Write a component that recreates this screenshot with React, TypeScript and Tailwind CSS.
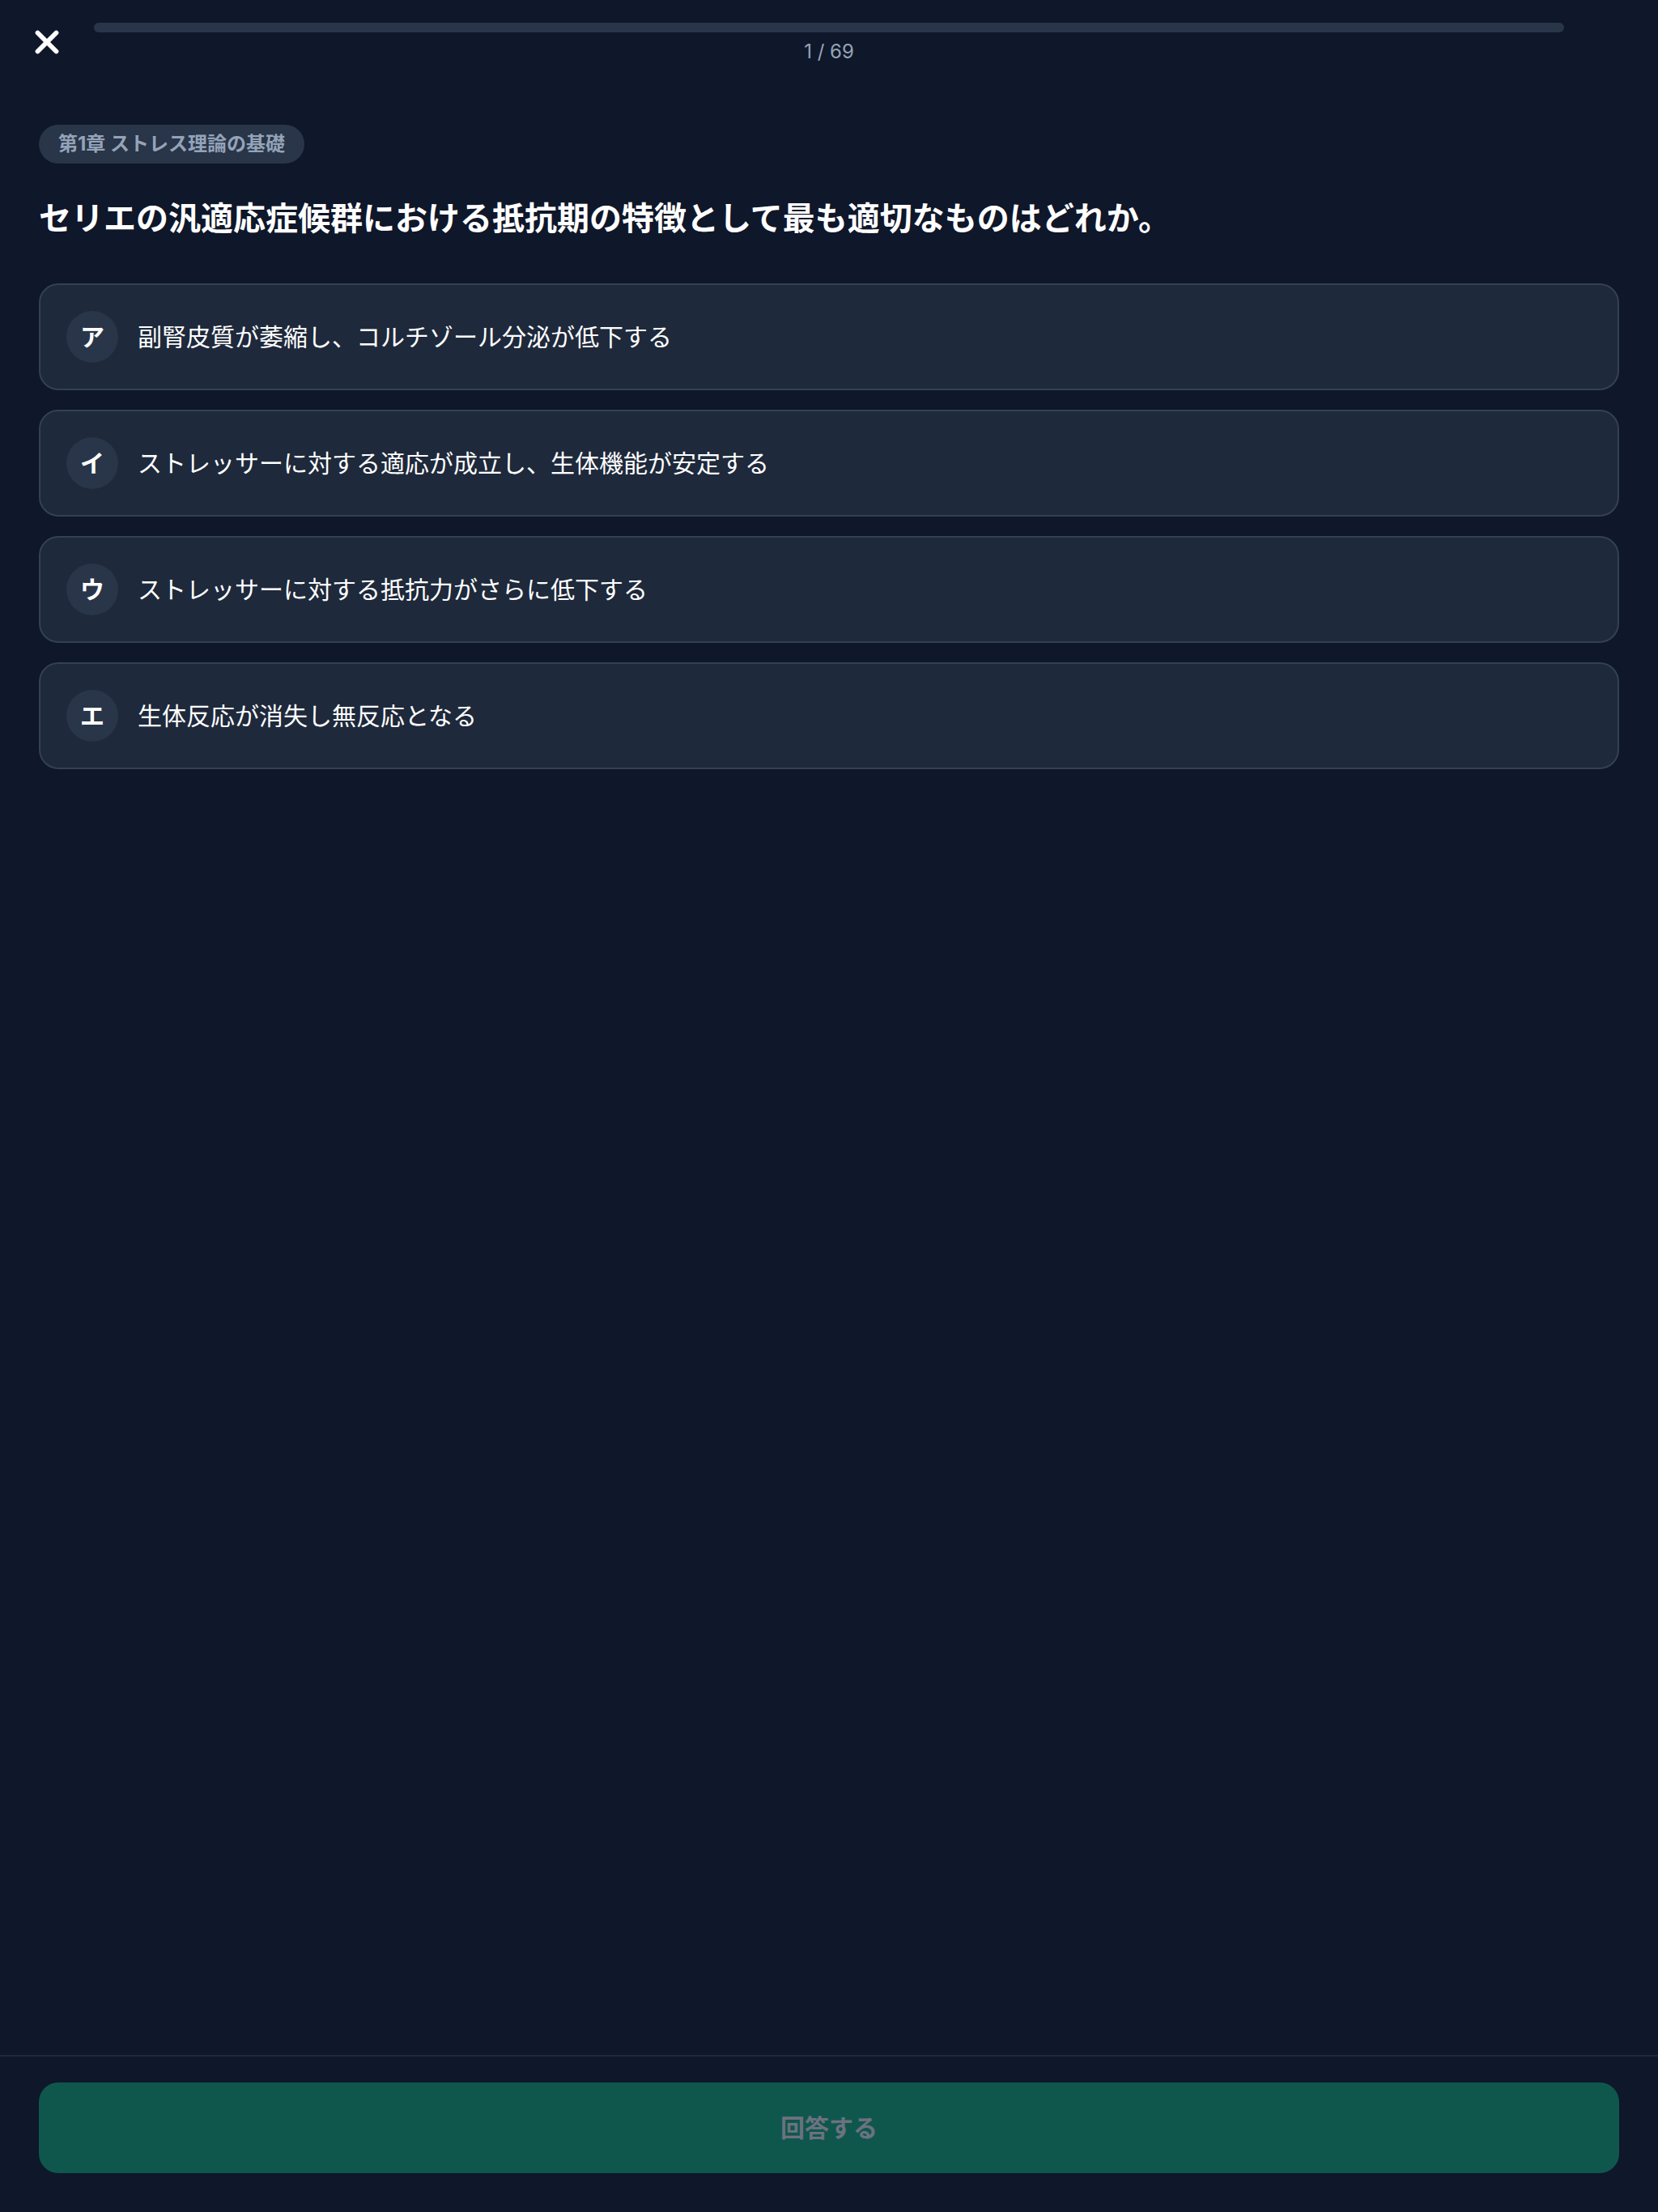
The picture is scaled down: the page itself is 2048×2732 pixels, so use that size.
import { X } from 'lucide-react'

const choices = [
  { key: 'ア', text: '副腎皮質が萎縮し、コルチゾール分泌が低下する' },
  { key: 'イ', text: 'ストレッサーに対する適応が成立し、生体機能が安定する' },
  { key: 'ウ', text: 'ストレッサーに対する抵抗力がさらに低下する' },
  { key: 'エ', text: '生体反応が消失し無反応となる' },
]

const FONT = 'font-["Inter","Noto_Sans_CJK_JP",sans-serif]'

export default function App() {
  return (
    <div className={`min-h-screen flex flex-col bg-[#0f172a] text-white ${FONT}`}>
      {/* ヘッダー: 閉じる + 進捗 */}
      <header className="flex items-start pt-[28px]">
        <div className="w-[116px] flex justify-center">
          <button className="h-[48px] w-[48px] flex items-center justify-center text-white" aria-label="閉じる">
            <X size={46} strokeWidth={3} />
          </button>
        </div>
        <div className="flex-1 flex flex-col">
          <div className="h-[12px] w-full rounded-full bg-[#293548]" />
          <div className="mt-[8px] text-center text-[24px] leading-[32px] text-[#94a3b8]">1 / 69</div>
        </div>
        <div className="w-[116px]" />
      </header>

      {/* 問題 */}
      <main className="flex-1 px-[48px] pt-[74px]">
        <span className="inline-flex h-[48px] items-center rounded-full bg-[#293548] px-[24px] text-[24px] font-bold text-[#94a3b8]">
          第1章 ストレス理論の基礎
        </span>

        <h1 className="mt-[40px] text-[40px] leading-[56px] font-bold text-white">
          セリエの汎適応症候群における抵抗期の特徴として最も適切なものはどれか。
        </h1>

        <div className="mt-[52px] flex flex-col gap-[24px]">
          {choices.map((c) => (
            <button
              key={c.key}
              className="flex items-center gap-[24px] rounded-[24px] border-2 border-[#334155] bg-[#1e293b] p-[32px] text-left"
            >
              <span className="flex h-[64px] w-[64px] shrink-0 items-center justify-center rounded-full bg-[#293548] text-[30px] font-bold text-white">
                {c.key}
              </span>
              <span className="text-[30px] leading-[40px] text-white">{c.text}</span>
            </button>
          ))}
        </div>
      </main>

      {/* フッター */}
      <footer className="border-t-2 border-[#1e293b] px-[48px] pt-[32px] pb-[48px]">
        <button
          disabled
          className="flex h-[112px] w-full items-center justify-center rounded-[24px] bg-[#0f574d] text-[30px] font-bold text-[#6b7280]"
        >
          回答する
        </button>
      </footer>
    </div>
  )
}
